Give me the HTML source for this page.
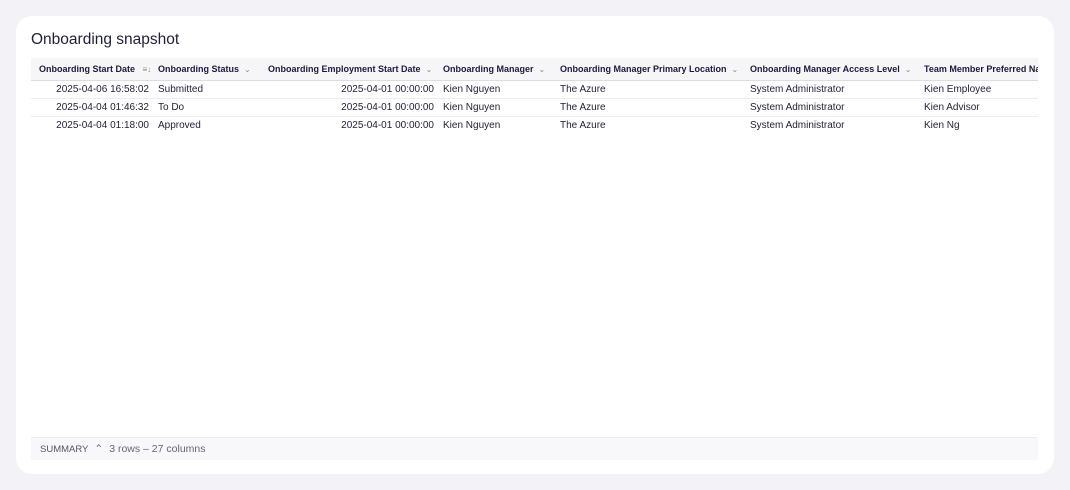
<!DOCTYPE html>
<html><head><style>
body{margin:0;width:1070px;height:490px;background:#f3f3f7;font-family:"Liberation Sans",sans-serif;overflow:hidden;position:relative}
.card{position:absolute;left:16px;top:16px;width:1038px;height:458px;background:#fff;border-radius:16px}
h1{position:absolute;left:31px;top:31px;margin:0;font-size:15.5px;font-weight:400;color:#1f1f3a}
.tbl{position:absolute;left:31px;top:58px;width:1007px;height:76px;overflow:hidden}
.row{position:absolute;left:0;height:18px;width:1007px;font-size:10px;color:#222238;border-bottom:1px solid #ececf1;box-sizing:border-box}
.hd{top:0;height:23px;background:#f6f6f9;font-weight:700;font-size:9px;color:#1b1b38;border-bottom:1.5px solid #dcdce4}
.c{position:absolute;top:0;line-height:17px;white-space:nowrap}
.hd .c{line-height:22px}
.r{text-align:right}
.ch{color:#888;font-weight:400;font-size:8px;margin-left:5px}
.sum{position:absolute;left:31px;top:437px;width:1007px;height:22px;background:#f8f8fb;border-top:1px solid #ececf1;font-size:10.5px;color:#667;line-height:22px}
</style></head><body>
<div class="card"></div>
<h1>Onboarding snapshot</h1>
<div class="tbl">
<div class="row hd">
<div class="c" style="left:8px">Onboarding Start Date <span class="ch">≡↓</span></div>
<div class="c" style="left:127px">Onboarding Status<span class="ch">⌄</span></div>
<div class="c" style="left:237px">Onboarding Employment Start Date<span class="ch">⌄</span></div>
<div class="c" style="left:412px">Onboarding Manager<span class="ch">⌄</span></div>
<div class="c" style="left:529px">Onboarding Manager Primary Location<span class="ch">⌄</span></div>
<div class="c" style="left:719px">Onboarding Manager Access Level<span class="ch">⌄</span></div>
<div class="c" style="left:893px">Team Member Preferred Name</div>
</div>
<div class="row" style="top:23px">
<div class="c r" style="right:889px">2025-04-06 16:58:02</div><div class="c" style="left:127px">Submitted</div><div class="c r" style="right:604px">2025-04-01 00:00:00</div><div class="c" style="left:412px">Kien Nguyen</div><div class="c" style="left:529px">The Azure</div><div class="c" style="left:719px">System Administrator</div><div class="c" style="left:893px">Kien Employee</div></div>
<div class="row" style="top:41px">
<div class="c r" style="right:889px">2025-04-04 01:46:32</div><div class="c" style="left:127px">To Do</div><div class="c r" style="right:604px">2025-04-01 00:00:00</div><div class="c" style="left:412px">Kien Nguyen</div><div class="c" style="left:529px">The Azure</div><div class="c" style="left:719px">System Administrator</div><div class="c" style="left:893px">Kien Advisor</div></div>
<div class="row" style="top:59px">
<div class="c r" style="right:889px">2025-04-04 01:18:00</div><div class="c" style="left:127px">Approved</div><div class="c r" style="right:604px">2025-04-01 00:00:00</div><div class="c" style="left:412px">Kien Nguyen</div><div class="c" style="left:529px">The Azure</div><div class="c" style="left:719px">System Administrator</div><div class="c" style="left:893px">Kien Ng</div></div>
</div>
<div class="sum"><span style="margin-left:9px;font-size:9.5px;color:#556">SUMMARY</span><span style="margin-left:6px">⌃</span><span style="margin-left:6px">3 rows – 27 columns</span></div>
</body></html>
